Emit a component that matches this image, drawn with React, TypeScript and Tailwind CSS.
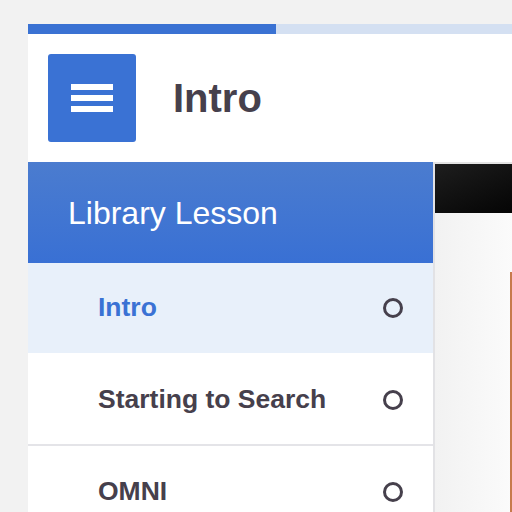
const lessons = [
  { title: "Intro", active: true },
  { title: "Starting to Search", active: false },
  { title: "OMNI", active: false },
];

const StatusCircle = () => (
  <span className="block w-[20px] h-[20px] rounded-full border-[3px] border-[#46404c]" />
);

export default function App() {
  return (
    <div className="w-[512px] h-[512px] overflow-hidden bg-[#f2f2f2] pl-[28px] pt-[24px] font-['Liberation_Sans',Arial,sans-serif]">
      <div className="w-[520px] h-[520px] bg-white flex flex-col">
        {/* progress */}
        <div className="h-[10px] flex">
          <div className="w-[248px] bg-[#3a72d3]" />
          <div className="flex-1 bg-[#d4e0f2]" />
        </div>

        {/* header */}
        <div className="h-[128px] flex items-center pl-[20px]">
          <button className="w-[88px] h-[88px] rounded-[3px] bg-[#3a72d4] flex flex-col items-center justify-center gap-[5px]">
            <span className="block w-[42px] h-[6px] bg-white" />
            <span className="block w-[42px] h-[6px] bg-white" />
            <span className="block w-[42px] h-[6px] bg-white" />
          </button>
          <h1 className="ml-[37px] text-[40px] font-bold text-[#46404c] leading-none">Intro</h1>
        </div>

        <div className="flex flex-1">
          {/* sidebar */}
          <aside className="w-[407px] shrink-0 border-r-2 border-[#e2e2e5] flex flex-col">
            <div className="h-[101px] flex items-center pl-[40px] bg-gradient-to-b from-[#4b7ccf] to-[#3970d4] text-white text-[32px]">
              Library Lesson
            </div>
            {lessons.map((l, i) => (
              <div
                key={l.title}
                className={
                  (l.active ? "bg-[#e8f0fa] text-[#3a72d4] h-[90px] " : "text-[#46404c] h-[91px] ") +
                  (i === 1 ? "border-b-2 border-[#e4e4e8] h-[93px] pt-[2px] " : "") +
                  "flex items-center justify-between pl-[70px] pr-[30px] text-[26.5px] font-bold shrink-0"
                }
              >
                <span>{l.title}</span>
                <StatusCircle />
              </div>
            ))}
          </aside>

          {/* content */}
          <main className="flex-1 border-t-2 border-[#e3e3e3] flex flex-col">
            <div className="h-[49px] bg-gradient-to-br from-[#1e1e1e] to-[#030303]" />
            <div className="flex-1 bg-gradient-to-r from-[#f2f2f2] to-white pt-[59px] pl-[75px]">
              <div className="h-full border-l-2 border-[#c77a4c]" />
            </div>
          </main>
        </div>
      </div>
    </div>
  );
}
